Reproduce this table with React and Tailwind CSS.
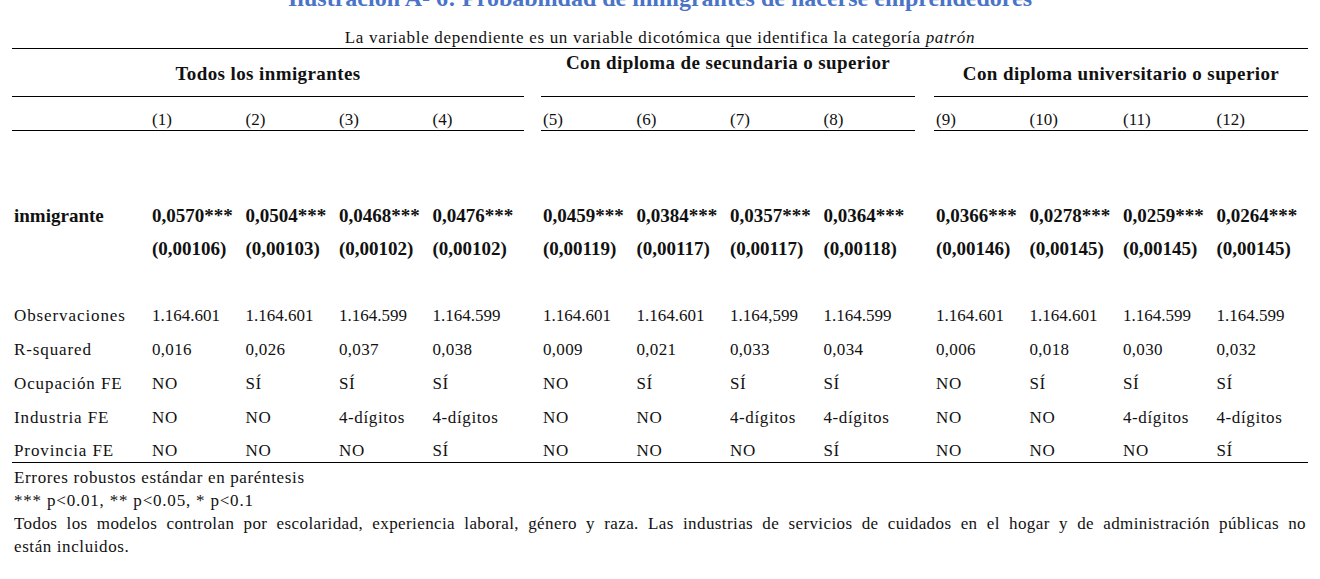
import React from 'react';

const GRID =
  'grid grid-cols-[138px_repeat(4,93.5px)_17px_repeat(4,93.5px)_19px_repeat(4,93.5px)]';

const rows = {
  coef: ['0,0570***', '0,0504***', '0,0468***', '0,0476***', '0,0459***', '0,0384***', '0,0357***', '0,0364***', '0,0366***', '0,0278***', '0,0259***', '0,0264***'],
  se: ['(0,00106)', '(0,00103)', '(0,00102)', '(0,00102)', '(0,00119)', '(0,00117)', '(0,00117)', '(0,00118)', '(0,00146)', '(0,00145)', '(0,00145)', '(0,00145)'],
  obs: ['1.164.601', '1.164.601', '1.164.599', '1.164.599', '1.164.601', '1.164.601', '1.164,599', '1.164.599', '1.164.601', '1.164.601', '1.164.599', '1.164.599'],
  r2: ['0,016', '0,026', '0,037', '0,038', '0,009', '0,021', '0,033', '0,034', '0,006', '0,018', '0,030', '0,032'],
  ocup: ['NO', 'SÍ', 'SÍ', 'SÍ', 'NO', 'SÍ', 'SÍ', 'SÍ', 'NO', 'SÍ', 'SÍ', 'SÍ'],
  ind: ['NO', 'NO', '4-dígitos', '4-dígitos', 'NO', 'NO', '4-dígitos', '4-dígitos', 'NO', 'NO', '4-dígitos', '4-dígitos'],
  prov: ['NO', 'NO', 'NO', 'SÍ', 'NO', 'NO', 'NO', 'SÍ', 'NO', 'NO', 'NO', 'SÍ'],
};

// label + 4 values, spacer, 4 values, spacer, 4 values
function Row({ label, values, className = '', cellClass = '', labelClass = '' }) {
  const cells = [];
  values.forEach((v, i) => {
    if (i === 4 || i === 8) cells.push(<div key={'s' + i} />);
    cells.push(
      <div key={i} className={'pl-[2px] whitespace-nowrap ' + cellClass}>
        {v}
      </div>
    );
  });
  return (
    <div className={GRID + ' ' + className}>
      <div className={'pl-[2px] whitespace-nowrap ' + labelClass}>{label}</div>
      {cells}
    </div>
  );
}

export default function App() {
  const nums = ['(1)', '(2)', '(3)', '(4)', '(5)', '(6)', '(7)', '(8)', '(9)', '(10)', '(11)', '(12)'];
  const word = 'tracking-[0.6px]';
  const label = 'tracking-[0.9px]';

  return (
    <div className="w-[1320px] h-[579px] overflow-hidden bg-white text-[#111] font-['Liberation_Serif',serif]">
      {/* Title, cut off at the top */}
      <div className="-mt-[13px] h-[23px] text-center text-[24px] leading-[23px] font-bold text-[#4a74c8] whitespace-nowrap">
        Ilustración A- 6: Probabilidad de inmigrantes de hacerse emprendedores
      </div>

      <div className="ml-[12px] w-[1296px]">
        {/* Subtitle */}
        <div className="h-[38px] pt-[18px] text-center text-[17px] leading-[20px] tracking-[0.7px]">
          La variable dependiente es un variable dicotómica que identifica la categoría <i>patrón</i>
        </div>

        {/* Group headers */}
        <div className={GRID + ' border-t border-black h-[49px] text-[19px] leading-[28px] font-bold tracking-[0.4px]'}>
          <div className="col-span-5 border-b border-black flex items-center justify-center pt-[2px]">
            Todos los inmigrantes
          </div>
          <div />
          <div className="col-span-4 border-b border-black flex justify-center">
            Con diploma de secundaria o superior
          </div>
          <div />
          <div className="col-span-4 border-b border-black flex items-center justify-center pt-[2px]">
            Con diploma universitario o superior
          </div>
        </div>

        {/* Column numbers */}
        <div className={GRID + ' h-[34px] text-[17px]'}>
          <div className="border-b border-black" />
          {nums.map((n, i) => (
            <React.Fragment key={n}>
              {(i === 4 || i === 8) && <div />}
              <div className="border-b border-black pl-[2px] pt-[13px] leading-[20px]">{n}</div>
            </React.Fragment>
          ))}
        </div>

        {/* Coefficients */}
        <div className="pt-[73px] text-[19px] leading-[24px] font-bold">
          <Row label="inmigrante" values={rows.coef} className="h-[24px] items-center" />
          <Row label="" values={rows.se} className="h-[24px] mt-[9px] items-center" />
        </div>

        {/* Stats */}
        <div className="pt-[38px] text-[17px] leading-[24px] border-b border-black">
          <Row label="Observaciones" values={rows.obs} className="h-[34px] items-center" labelClass={label} />
          <Row label="R-squared" values={rows.r2} className="h-[34px] items-center" labelClass={label} cellClass="tracking-[0.3px]" />
          <Row label="Ocupación FE" values={rows.ocup} className="h-[34px] items-center" labelClass={label} cellClass={word} />
          <Row label="Industria FE" values={rows.ind} className="h-[34px] items-center" labelClass={label} cellClass={word} />
          <Row label="Provincia FE" values={rows.prov} className="h-[27px] items-end" labelClass={label + ' leading-[22px]'} cellClass={word + ' leading-[22px]'} />
        </div>

        {/* Notes */}
        <div className="pt-[3px] text-[17px] leading-[23px] pl-[2px] pr-[2px]">
          <div className="tracking-[0.65px]">Errores robustos estándar en paréntesis</div>
          <div className="tracking-[0.8px]">*** p&lt;0.01, ** p&lt;0.05, * p&lt;0.1</div>
          <div className="text-justify [text-align-last:justify] tracking-[0.4px]">
            Todos los modelos controlan por escolaridad, experiencia laboral, género y raza. Las industrias de servicios de cuidados en el hogar y de administración públicas no
          </div>
          <div className="tracking-[0.6px]">están incluidos.</div>
        </div>
      </div>
    </div>
  );
}
